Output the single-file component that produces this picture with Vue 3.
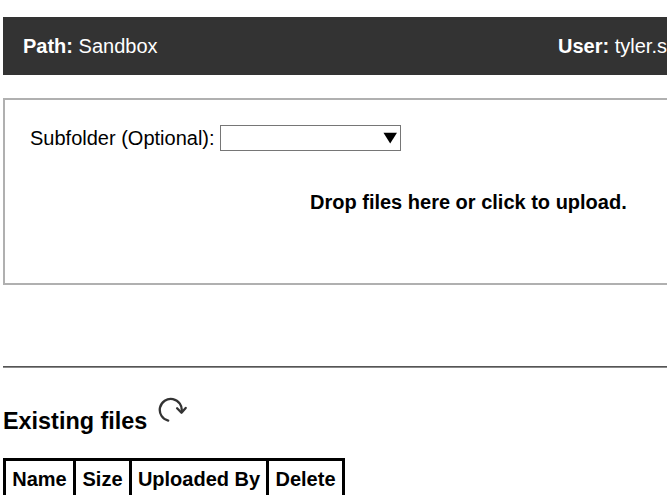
<script setup>
const columns = ['Name', 'Size', 'Uploaded By', 'Delete']
</script>

<template>
  <div class="page">
    <header class="bar">
      <div><b>Path:</b> Sandbox</div>
      <div class="user"><b>User:</b> tyler.s</div>
    </header>
    <section class="dropzone">
      <label class="field">
        Subfolder (Optional):
        <span class="combo">
          <input type="text" />
          <svg width="14" height="12" viewBox="0 0 14 12"><path d="M0.5 0.8H14L7.2 11.5Z" /></svg>
        </span>
      </label>
      <div class="message">Drop files here or click to upload.</div>
    </section>
    <div class="rule"></div>
    <div class="heading">
      <h3>Existing files</h3>
      <svg class="refresh" width="30" height="26" viewBox="0 0 30 26">
        <path d="M10.2 23.6A11 11 0 1 1 23.6 14.8" />
        <path d="M19.1 11.3L23.5 15.8L27.7 10.9" />
      </svg>
    </div>
    <table>
      <thead>
        <tr><th v-for="c in columns" :key="c" :class="c.slice(0, 4).toLowerCase()">{{ c }}</th></tr>
      </thead>
    </table>
  </div>
</template>

<style>
body { background: #fff; overflow: hidden; }
</style>

<style scoped>
.page {
  box-sizing: border-box;
  height: 495px;
  padding: 17px 0 0 3px;
  overflow: hidden;
  font: 20px/24px "Liberation Sans", Arial, sans-serif;
  color: #000;
}
.bar {
  box-sizing: border-box;
  display: flex;
  justify-content: space-between;
  height: 58px;
  padding: 17px 0 0 20px;
  background: #333;
  color: #fff;
  white-space: nowrap;
}
.user { width: 109px; }
.dropzone {
  box-sizing: border-box;
  height: 187px;
  margin-top: 23px;
  padding: 25px 0 0 25px;
  border: 2px solid #b0b0b0;
  border-right: 0;
}
.field { display: flex; align-items: center; gap: 5px; height: 26px; }
.combo {
  box-sizing: border-box;
  display: flex;
  align-items: center;
  width: 181px;
  height: 26px;
  padding-right: 3px;
  border: 1px solid #767676;
}
.combo input {
  flex: 1;
  min-width: 0;
  height: 100%;
  padding: 0;
  border: 0;
  outline: 0;
  font: inherit;
}
.message { margin: 39px 0 0 280px; font-weight: bold; white-space: nowrap; }
.rule { height: 1px; margin-top: 81px; background: #555; border-bottom: 1px solid #8a8a8a; }
.heading { display: flex; gap: 10.6px; height: 61px; margin-top: 29px; }
h3 { margin: 10px 0 0; font-size: 23.4px; line-height: 28px; }
.refresh { fill: none; stroke: #333; stroke-width: 2.3; stroke-linecap: round; stroke-linejoin: round; }
table { border-collapse: collapse; table-layout: fixed; width: 342px; }
th { height: 30px; padding: 6px 0 0; border: 3px solid #000; vertical-align: top; white-space: nowrap; }
.name { width: 67px; }
.size { width: 53px; }
.uplo { width: 134px; }
.dele { width: 73px; }
</style>
